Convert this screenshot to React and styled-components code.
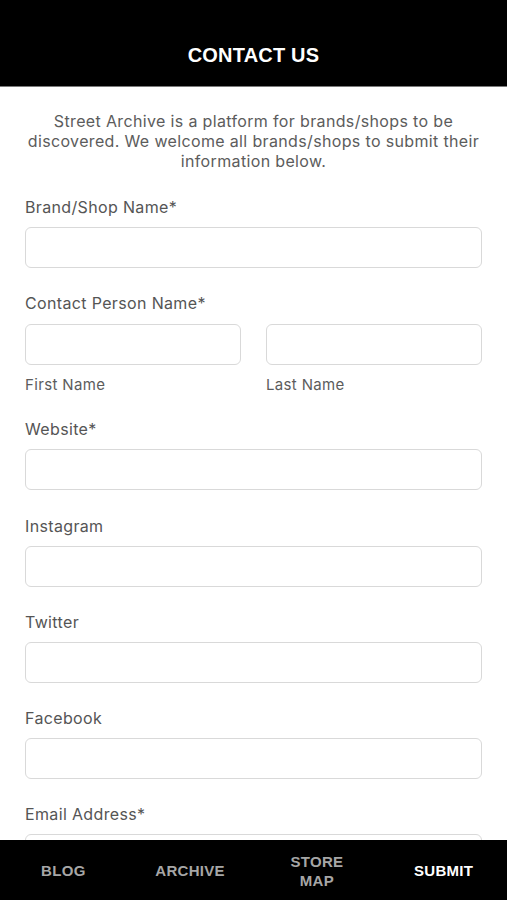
import styled, { createGlobalStyle } from 'styled-components';

const GlobalStyle = createGlobalStyle`
  html, body {
    margin: 0;
    padding: 0;
    background: #ffffff;
  }
  * {
    box-sizing: border-box;
  }
`;

const Screen = styled.div`
  width: 507px;
  height: 900px;
  display: flex;
  flex-direction: column;
  font-family: Inter, "Liberation Sans", Arial, sans-serif;
  letter-spacing: 0.35px;
  overflow: hidden;
`;

const Header = styled.header`
  height: 87px;
  flex-shrink: 0;
  background: #000;
  border-bottom: 1px solid #7a7a7a;
  display: flex;
  align-items: flex-end;
  justify-content: center;
  padding-bottom: 19px;
`;

const Title = styled.h1`
  margin: 0;
  color: #fff;
  font-family: "Liberation Sans", Arial, sans-serif;
  font-size: 20px;
  font-weight: 700;
  letter-spacing: 0.2px;
  line-height: 24px;
`;

const Content = styled.main`
  flex: 1;
  overflow: hidden;
  padding: 24px 25px 0;
`;

const Intro = styled.p`
  margin: 0 -4px 26px;
  text-align: center;
  color: #5c5c5c;
  font-size: 16px;
  line-height: 20px;
`;

const Field = styled.div`
  margin-bottom: ${(p) => p.$gap || 25.25}px;
`;

const Label = styled.label`
  display: block;
  color: #555;
  font-size: 16px;
  line-height: 20px;
  margin-bottom: ${(p) => p.$gap || 10}px;
`;

const Input = styled.input`
  display: block;
  width: 100%;
  height: 41px;
  border: 1px solid #d9d9d9;
  border-radius: 6px;
  background: #fff;
  font-size: 16px;
  padding: 0 10px;
  outline: none;
`;

const Row = styled.div`
  display: grid;
  grid-template-columns: 1fr 1fr;
  column-gap: 25px;
`;

const SubLabel = styled.span`
  display: block;
  color: #5c5c5c;
  font-size: 15px;
  line-height: 18px;
  margin-top: 11px;
`;

const TabBar = styled.nav`
  height: 60px;
  flex-shrink: 0;
  background: #000;
  display: grid;
  grid-template-columns: repeat(4, 1fr);
`;

const Tab = styled.div`
  display: flex;
  align-items: center;
  justify-content: center;
  text-align: center;
  color: ${(p) => (p.$active ? '#fff' : '#a6a6a6')};
  font-family: "Liberation Sans", Arial, sans-serif;
  font-size: 15px;
  font-weight: 700;
  line-height: 19px;
  letter-spacing: 0.3px;
  padding-top: 1px;
`;

const fields = [
  { label: 'Website*' },
  { label: 'Instagram' },
  { label: 'Twitter' },
  { label: 'Facebook' },
  { label: 'Email Address*' },
];

export default function App() {
  return (
    <Screen>
      <GlobalStyle />
      <Header>
        <Title>CONTACT US</Title>
      </Header>
      <Content>
        <Intro>
          Street Archive is a platform for brands/shops to be discovered. We welcome all
          brands/shops to submit their information below.
        </Intro>

        <Field>
          <Label>Brand/Shop Name*</Label>
          <Input type="text" />
        </Field>

        <Field $gap={25}>
          <Label $gap={11}>Contact Person Name*</Label>
          <Row>
            <div>
              <Input type="text" />
              <SubLabel>First Name</SubLabel>
            </div>
            <div>
              <Input type="text" />
              <SubLabel>Last Name</SubLabel>
            </div>
          </Row>
        </Field>

        {fields.map((f) => (
          <Field key={f.label}>
            <Label>{f.label}</Label>
            <Input type="text" />
          </Field>
        ))}
      </Content>
      <TabBar>
        <Tab>BLOG</Tab>
        <Tab>ARCHIVE</Tab>
        <Tab>
          STORE
          <br />
          MAP
        </Tab>
        <Tab $active>SUBMIT</Tab>
      </TabBar>
    </Screen>
  );
}
